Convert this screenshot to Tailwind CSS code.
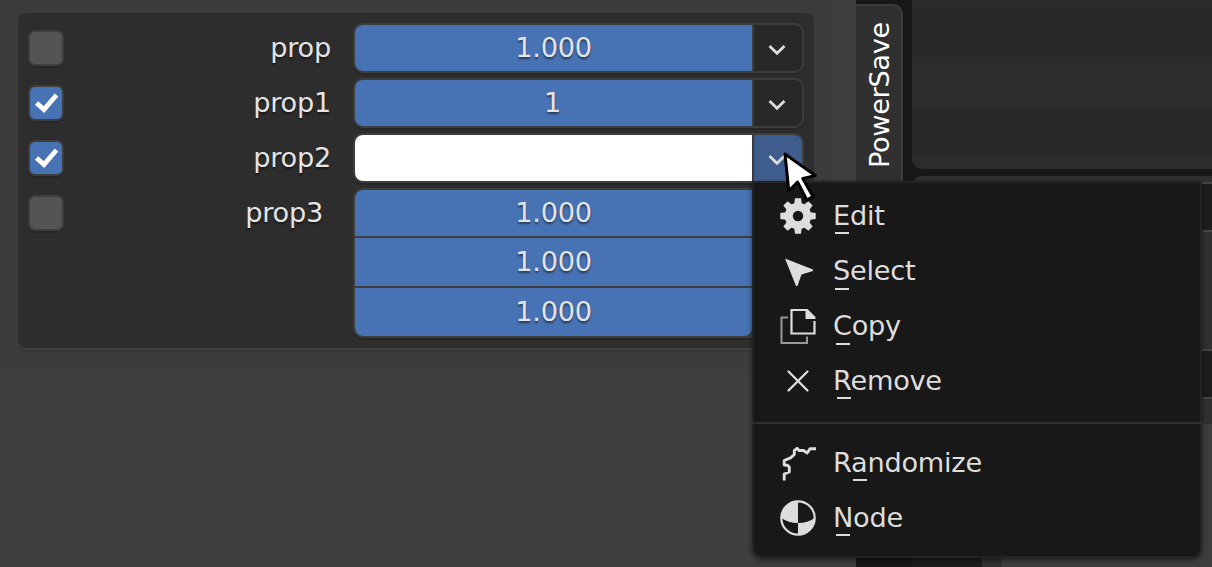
<!DOCTYPE html>
<html lang="en">
<head>
<meta charset="utf-8">
<title>Properties</title>
<script src="https://cdn.jsdelivr.net/npm/@tailwindcss/browser@4"></script>
</head>
<body class="relative flex h-[567px] w-[1212px] overflow-hidden bg-[#171717] font-['DejaVu_Sans',sans-serif] text-[27.2px] leading-[50px] tracking-[-0.25px] text-[#e4e4e4]">
<svg class="hidden">
  <symbol id="chev" viewBox="0 0 18 12"><path d="M1.500 2 L9 9.300 L16.500 2" fill="none" stroke="#dcdcdc" stroke-width="2.800"/></symbol>
  <symbol id="check" viewBox="0 0 32 32"><path d="M6.500 16 L14 22.500 L26.500 8" fill="none" stroke="#fff" stroke-width="4.900"/></symbol>
</svg>

<main class="flex w-[856px] flex-col bg-[#3e3e3e]">
  <div class="h-[370px] w-[837px] bg-[#3c3c3c] pt-[13px] pl-[18px]">
    <section class="flex h-[335px] w-[796px] flex-col gap-[5px] rounded-lg bg-[#2d2d2d] pt-[10px] pl-[10px] shadow-[0_2px_0_#3f3f3f,0_4px_0_#373737] text-shadow-[0_2px_2px_rgb(0_0_0/0.5)]">
      <div class="flex h-[50px] items-center">
        <div class="size-9 rounded-[7px] border-2 border-[#3d3d3d] bg-[#545454] shadow-[0_2px_0_#272727]"></div>
        <div class="w-[268px] pr-px text-right">prop</div>
        <div class="ml-[21px] flex h-[50px] w-[451px] rounded-[10px] border-2 border-[#3d3d3d] shadow-[0_2px_0_#262626]">
          <div class="w-[397px] rounded-l-lg bg-[#4772b3] text-center leading-[46px]">1.000</div>
          <div class="flex flex-1 items-center justify-center rounded-r-lg border-l-2 border-[#3d3d3d] bg-[#282828]"><svg class="mt-[4px] mr-[2px] h-3 w-[18px]"><use href="#chev"/></svg></div>
        </div>
      </div>
      <div class="flex h-[50px] items-center">
        <div class="size-9 rounded-[7px] border-2 border-[#3d3d3d] bg-[#4772b3] shadow-[0_2px_0_#272727]"><svg class="size-8"><use href="#check"/></svg></div>
        <div class="w-[268px] pr-px text-right">prop1</div>
        <div class="ml-[21px] flex h-[50px] w-[451px] rounded-[10px] border-2 border-[#3d3d3d] shadow-[0_2px_0_#262626]">
          <div class="w-[397px] rounded-l-lg bg-[#4772b3] pr-[2px] text-center leading-[46px]">1</div>
          <div class="flex flex-1 items-center justify-center rounded-r-lg border-l-2 border-[#3d3d3d] bg-[#282828]"><svg class="mt-[4px] mr-[2px] h-3 w-[18px]"><use href="#chev"/></svg></div>
        </div>
      </div>
      <div class="flex h-[50px] items-center">
        <div class="size-9 rounded-[7px] border-2 border-[#3d3d3d] bg-[#4772b3] shadow-[0_2px_0_#272727]"><svg class="size-8"><use href="#check"/></svg></div>
        <div class="w-[268px] pr-px text-right">prop2</div>
        <div class="ml-[21px] flex h-[50px] w-[451px] rounded-[10px] border-2 border-[#3d3d3d] shadow-[0_2px_0_#262626]">
          <div class="w-[397px] rounded-l-lg bg-white"></div>
          <div class="flex flex-1 items-center justify-center rounded-tr-lg border-l-2 border-[#3d3d3d] bg-[#3f5d8c]"><svg class="mt-[4px] mr-[2px] h-3 w-[18px]"><use href="#chev"/></svg></div>
        </div>
      </div>
      <div class="flex items-start">
        <div class="mt-[7px] size-9 rounded-[7px] border-2 border-[#3d3d3d] bg-[#545454] shadow-[0_2px_0_#272727]"></div>
        <div class="w-[268px] pr-[9px] text-right">prop3</div>
        <div class="ml-[21px] flex h-[150px] w-[451px] flex-col gap-[2px] overflow-hidden rounded-[10px] border-2 border-[#3d3d3d] bg-[#3d3d3d] shadow-[0_2px_0_#262626]">
          <div class="h-[46px] w-[397px] rounded-tl-lg bg-[#4772b3] text-center leading-[46px]">1.000</div>
          <div class="h-[48px] w-[397px] bg-[#4772b3] text-center leading-[48px]">1.000</div>
          <div class="h-[48px] w-[397px] rounded-b-lg bg-[#4772b3] text-center leading-[48px]">1.000</div>
        </div>
      </div>
    </section>
  </div>
</main>

<aside class="w-14 pt-1">
  <div class="flex h-[200px] w-[47px] rounded-tr-[10px] border-t-2 border-r-2 border-[#3d3d3d] bg-[#303030] pt-[15px]">
    <div class="ml-px h-[148px] w-[45px] rotate-180 text-center leading-[45px] tracking-[-0.350px] text-white [writing-mode:vertical-rl]">PowerSave</div>
  </div>
</aside>

<div class="flex w-[300px] flex-col">
  <div class="flex h-[169px] flex-col overflow-hidden rounded-bl-[10px] bg-[#2c2c2c] pt-[7px]">
    <div class="h-[50px] bg-[#282828]"></div>
    <div class="h-[50px]"></div>
    <div class="h-[49px] bg-[#282828]"></div>
  </div>
  <div class="mt-[7px] flex flex-1 justify-between rounded-tl-[10px] bg-[#303030]">
    <div class="mt-6 w-[70px] bg-[#1d1d1d]"></div>
    <div class="flex w-[210px] flex-col pt-[6px]">
      <div class="h-[50px] border-y-2 border-[#454545] bg-[#1d1d1d]"></div>
      <div class="mt-[117px] h-[50px] border-y-2 border-[#454545] bg-[#1d1d1d]"></div>
      <div class="mt-[25px] flex-1 bg-[#3d3d3d]"></div>
    </div>
  </div>
</div>

<nav class="absolute top-[181px] left-[752px] h-[377px] w-[450px] rounded-b-[10px] border-2 border-[#242424] bg-[#181818] pt-[5px] text-[#dddddd] shadow-[0_2px_5px_rgb(0_0_0/0.5)]">
  <div class="flex h-[55px] items-center gap-[17px] pl-[26px]">
    <svg class="size-9" viewBox="-18 -18 36 36" fill="#dddddd"><g id="teeth"><path d="M-3 -17.700H3L4 -10H-4ZM-3 17.700H3L4 10H-4ZM-17.700 -3V3L-10 4V-4ZM17.700 -3V3L10 4V-4Z"/></g><use href="#teeth" transform="rotate(45)"/><circle r="9.200" fill="none" stroke="#dddddd" stroke-width="8"/></svg>
    <span class="relative">Edit<i class="absolute top-[41px] left-[2px] h-[2px] w-[14px] bg-[#dddddd]"></i></span>
  </div>
  <div class="flex h-[55px] items-center gap-[17px] pl-[26px]">
    <svg class="size-9" viewBox="0 0 36 36" fill="#dddddd"><path d="M5 5.500 L33 16.500 V18 L21.500 21.500 L17.500 33 H16Z"/></svg>
    <span class="relative">Select<i class="absolute top-[42px] left-[2px] h-[2px] w-[14px] bg-[#dddddd]"></i></span>
  </div>
  <div class="flex h-[55px] items-center gap-[17px] pl-[26px]">
    <svg class="size-9" viewBox="0 0 36 36" fill="none" stroke-width="2"><path d="M8 9.500 H1.500 V35 H27 V28.500" stroke="#989898"/><path d="M26.500 2 H11.500 V25.500 H34.500 V13" stroke="#dddddd" stroke-width="2.200"/><path d="M25.500 1 H27.500 L35.500 9 V11 H25.500Z" fill="#dddddd"/></svg>
    <span class="relative">Copy<i class="absolute top-[42px] left-[3px] h-[2px] w-[14px] bg-[#dddddd]"></i></span>
  </div>
  <div class="flex h-[55px] items-center gap-[17px] pl-[26px]">
    <svg class="size-9" viewBox="0 0 36 36" fill="none" stroke="#dddddd" stroke-width="2.300"><path d="M8.500 8.500 L27.500 27.500 M27.500 8.500 L8.500 27.500" stroke-linecap="round"/></svg>
    <span class="relative">Remove<i class="absolute top-[41px] left-[4px] h-[2px] w-[14px] bg-[#dddddd]"></i></span>
  </div>
  <div class="mt-[14px] mb-[11px] -mx-[2px] h-[2px] bg-[#2f2f2f]"></div>
  <div class="flex h-[55px] items-center gap-[17px] pl-[26px]">
    <svg class="size-9" viewBox="0 0 36 36" fill="none" stroke="#dddddd" stroke-width="2.900" stroke-linejoin="round"><path d="M4.200 35.500 V29 L9.300 27 V22 L7.500 20.300 L4.200 20 V15.500 L10.500 12.800 L14.300 9.500 V5.500 L17 3.300 L19 5.500 H23.500 L27.200 8 L30 3.800 H36"/></svg>
    <span class="relative">Randomize<i class="absolute top-[41px] left-[20px] h-[2px] w-[14px] bg-[#dddddd]"></i></span>
  </div>
  <div class="flex h-[55px] items-center gap-[17px] pl-[26px]">
    <svg class="size-9" viewBox="0 0 36 36"><circle cx="18" cy="18" r="16.700" fill="none" stroke="#dddddd" stroke-width="2.200"/><path d="M18 1.500 V23 Q8 23 1.500 18 A16.500 16.500 0 0 1 18 1.500Z M18 23 Q28 23 34.500 18 A16.500 16.500 0 0 1 18 34.500Z" fill="#dddddd"/></svg>
    <span class="relative">Node<i class="absolute top-[41px] left-[3px] h-[2px] w-[14px] bg-[#dddddd]"></i></span>
  </div>
</nav>

<svg class="absolute top-[150px] left-[780px] h-[56px] w-[42px]" viewBox="0 0 42 56"><path d="M5 4 L35.300 25.600 L22.800 28.500 L33 46.500 L26.800 50 L17.500 32 L8.800 41Z" fill="#fff" stroke="#000" stroke-width="3" stroke-linejoin="round"/></svg>
</body>
</html>
